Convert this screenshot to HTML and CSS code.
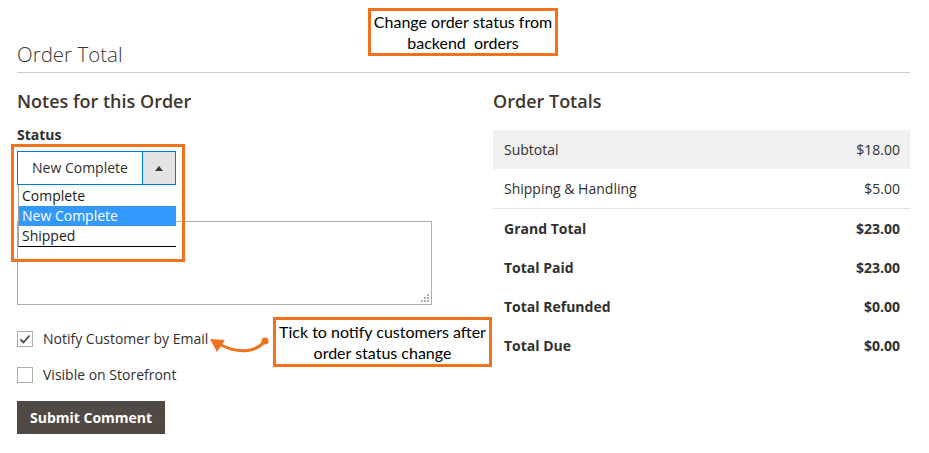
FILE: index.html
```html
<!DOCTYPE html>
<html lang="en">
<head>
    <meta charset="UTF-8">
    <title>Order Total</title>
    <link rel="stylesheet" href="styles.css">
</head>
<body>
    <div class="page">
        <h1 class="page-title">Order Total</h1>

        <div class="columns">
            <div class="notes">
                <h2>Notes for this Order</h2>
                <div class="label">Status</div>
                <div class="field">
                    <div class="select">
                        <span class="select-value">New Complete</span>
                        <span class="select-btn"><span class="arrow-up"></span></span>
                    </div>
                    <ul class="options">
                        <li>Complete</li>
                        <li class="selected">New Complete</li>
                        <li>Shipped</li>
                    </ul>
                    <div class="mark mark-status"></div>
                </div>
                <div class="textarea">
                    <svg class="grip" width="8" height="8" viewBox="0 0 8 8">
                        <rect x="6" y="0" width="2" height="2" fill="#b0b0b0"/>
                        <rect x="3" y="3" width="2" height="2" fill="#b0b0b0"/>
                        <rect x="6" y="3" width="2" height="2" fill="#b0b0b0"/>
                        <rect x="0" y="6" width="2" height="2" fill="#b0b0b0"/>
                        <rect x="3" y="6" width="2" height="2" fill="#b0b0b0"/>
                        <rect x="6" y="6" width="2" height="2" fill="#b0b0b0"/>
                    </svg>
                </div>
                <div class="check-row first">
                    <span class="checkbox">
                        <svg width="14" height="14" viewBox="0 0 14 14"><path d="M2.5 7.5 L5.5 10.5 L11.5 3.5" fill="none" stroke="#514943" stroke-width="1.8"/></svg>
                    </span>
                    <span>Notify Customer by Email</span>
                </div>
                <div class="check-row">
                    <span class="checkbox"></span>
                    <span>Visible on Storefront</span>
                </div>
                <button class="submit">Submit Comment</button>
            </div>

            <div class="totals">
                <h2>Order Totals</h2>
                <table>
                    <tr class="sub"><td>Subtotal</td><td>$18.00</td></tr>
                    <tr class="ship"><td>Shipping &amp; Handling</td><td>$5.00</td></tr>
                    <tr class="strong"><td>Grand Total</td><td>$23.00</td></tr>
                    <tr class="strong"><td>Total Paid</td><td>$23.00</td></tr>
                    <tr class="strong"><td>Total Refunded</td><td>$0.00</td></tr>
                    <tr class="strong"><td>Total Due</td><td>$0.00</td></tr>
                </table>
            </div>
        </div>

        <!-- annotations -->
        <div class="note note-top">Change order status from<br>backend&nbsp; orders</div>
        <div class="note note-tick">Tick to notify customers after<br>order status change</div>
        <svg class="pointer" width="66" height="30" viewBox="0 0 66 30">
            <path d="M60 11 C52 21 36 25 16 15" fill="none" stroke="#f0721d" stroke-width="3" stroke-linecap="round"/>
            <polygon points="5,9 20,10 12,22" fill="#f0721d"/>
            <circle cx="60" cy="11" r="3.5" fill="#f0721d"/>
        </svg>
    </div>
</body>
</html>
```

FILE: styles.css
```css
body {
    margin: 0;
    background: #ffffff;
}
.page {
    position: relative;
    padding: 42px 19px 0 17px;
    font-family: "Open Sans", "DejaVu Sans", sans-serif;
    font-size: 14px;
    color: #303030;
}
.page-title {
    margin: 0;
    font-size: 20.5px;
    line-height: 25px;
    font-weight: 300;
    color: #41362f;
    padding-bottom: 5px;
    border-bottom: 1px solid #cccccc;
}
.columns {
    display: flex;
    gap: 61px;
    margin-top: 17px;
}
.notes {
    width: 415px;
}
.totals {
    flex: 1;
}
h2 {
    margin: 0;
    font-size: 18px;
    line-height: 22px;
    font-weight: 600;
    color: #41362f;
}
.notes h2 {
    margin-bottom: 14px;
}
.totals h2 {
    margin-bottom: 18px;
}
.label {
    font-weight: 700;
    line-height: 18px;
    margin-bottom: 7px;
}

/* status select, shown open */
.field {
    position: relative;
    width: 159px;
    margin-bottom: 36px;
}
.select {
    display: flex;
    height: 34px;
    box-sizing: border-box;
    border: 1px solid #007bdb;
    background: #ffffff;
}
.select-value {
    flex: 1;
    padding-left: 14px;
    line-height: 32px;
}
.select-btn {
    width: 32px;
    border-left: 1px solid #007bdb;
    background: #e3e3e3;
    display: flex;
    align-items: center;
    justify-content: center;
}
.arrow-up {
    width: 0;
    height: 0;
    border-left: 4px solid transparent;
    border-right: 4px solid transparent;
    border-bottom: 5px solid #41362f;
}
.options {
    position: absolute;
    left: 1px;
    top: 34px;
    width: 158px;
    margin: 0;
    padding: 1px 0 0;
    list-style: none;
    background: #ffffff;
    border-left: 1px solid #a0a0a0;
    border-bottom: 1px solid #000000;
    box-sizing: border-box;
    z-index: 2;
}
.options li {
    height: 20px;
    line-height: 20px;
    padding-left: 3px;
    color: #1a1a1a;
}
.options li.selected {
    background: #3399ff;
    color: #ffffff;
}
.mark-status {
    position: absolute;
    left: -6px;
    top: -7px;
    width: 174px;
    height: 118px;
    z-index: 3;
}
.mark {
    box-sizing: border-box;
    border: 3px solid #f0721d;
}

.textarea {
    position: relative;
    height: 84px;
    box-sizing: border-box;
    border: 1px solid #adadad;
}
.grip {
    position: absolute;
    right: 2px;
    bottom: 2px;
}

.check-row {
    display: flex;
    align-items: center;
    gap: 10px;
    line-height: 16px;
    margin-top: 20px;
}
.check-row.first {
    margin-top: 26px;
}
.checkbox {
    width: 16px;
    height: 16px;
    box-sizing: border-box;
    border: 1px solid #adadad;
    display: flex;
    align-items: center;
    justify-content: center;
}
.submit {
    margin-top: 18px;
    height: 33px;
    padding: 0 13px;
    border: none;
    background: #514943;
    color: #ffffff;
    font-family: inherit;
    font-size: 14px;
    font-weight: 700;
}

/* totals table */
table {
    width: 100%;
    border-collapse: collapse;
}
td {
    height: 39px;
    padding: 0 10px 0 11px;
}
td:last-child {
    text-align: right;
}
tr.sub td {
    background: #f0f0f0;
}
tr.ship td {
    border-bottom: 1px solid #e3e3e3;
}
tr.strong td {
    font-weight: 700;
}

/* orange callouts */
.note {
    position: absolute;
    box-sizing: border-box;
    border: 3px solid #f0721d;
    background: #ffffff;
    font-family: Lato, "Liberation Sans", sans-serif;
    font-size: 16px;
    line-height: 21px;
    color: #000000;
    text-align: center;
}
.note-top {
    left: 368px;
    top: 8px;
    width: 190px;
    height: 48px;
}
.note-tick {
    left: 273px;
    top: 317px;
    width: 219px;
    height: 50px;
    padding-top: 1px;
}
.pointer {
    position: absolute;
    left: 205px;
    top: 330px;
}
```
